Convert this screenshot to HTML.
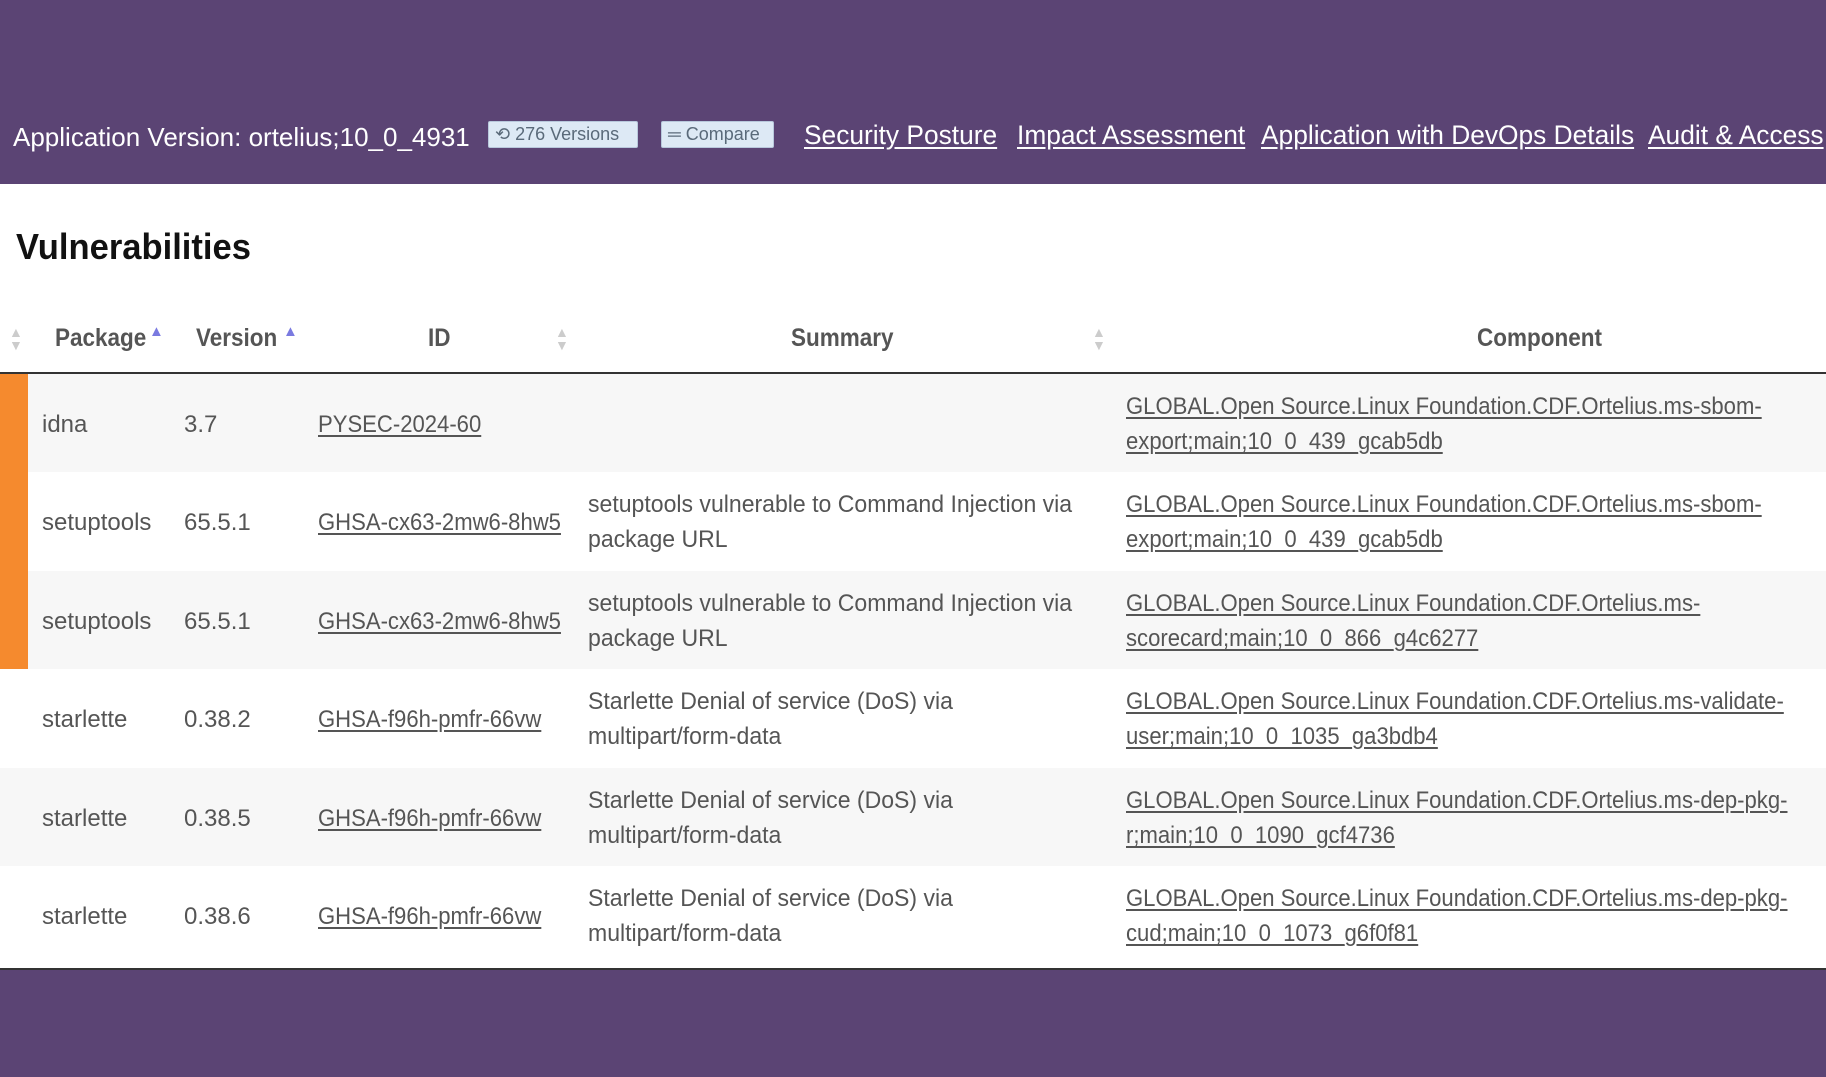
<!DOCTYPE html>
<html><head><meta charset="utf-8"><style>
*{margin:0;padding:0;box-sizing:border-box}
body{width:1826px;height:1077px;background:#5b4474;position:relative;overflow:hidden;font-family:"Liberation Sans",sans-serif;color:#555}
.a{position:absolute;white-space:nowrap}
.hdr{color:#fff;font-size:26px;top:122px}
.nav{color:#fff;font-size:27px;top:120px;text-decoration:underline;text-underline-offset:3px;transform:scaleX(0.975);transform-origin:left}
.btn{top:121px;height:27px;background:#dde9f5;border:1px solid #b8c8dc;color:#5a6a7a;font-size:18px;line-height:25px;padding:0 6px;border-radius:2px}
.main{position:absolute;left:0;top:184px;width:1826px;height:786px;background:#fff}
.row{position:absolute;left:0;width:1826px;height:98px}
.c{position:absolute;font-size:24px;line-height:35px;color:#555;white-space:nowrap;transform-origin:left}
.u{text-decoration:underline;text-underline-offset:3px;transform:scaleX(0.92)}
.s{transform:scaleX(0.96)}
.th{position:absolute;top:140px;font-size:25px;font-weight:bold;color:#555;white-space:nowrap;transform:scaleX(0.9);transform-origin:left}
.sort{position:absolute;top:142px;color:#ccc;font-size:14px;line-height:13px;text-align:center}
.up{position:absolute;top:139px;color:#7a7ae0;font-size:15px}
</style></head><body>
<div class="a hdr" style="left:13px">Application Version: ortelius;10_0_4931</div>
<div class="a btn" style="left:488px;width:150px">&#x27F2; 276 Versions</div>
<div class="a btn" style="left:661px;width:113px">&#x2550; Compare</div>
<div class="a nav" style="left:804px">Security Posture</div>
<div class="a nav" style="left:1017px">Impact Assessment</div>
<div class="a nav" style="left:1261px">Application with DevOps Details</div>
<div class="a nav" style="left:1648px">Audit &amp; Access</div>
<div class="main">
<div class="a" style="left:16px;top:42px;font-size:36px;font-weight:bold;color:#111;transform:scaleX(0.96);transform-origin:left">Vulnerabilities</div>
<div class="sort" style="left:9px">▲<br>▼</div>
<div class="th" style="left:55px">Package</div><div class="up" style="left:149px">▲</div>
<div class="th" style="left:196px">Version</div><div class="up" style="left:283px">▲</div>
<div class="th" style="left:428px">ID</div>
<div class="sort" style="left:555px">▲<br>▼</div>
<div class="th" style="left:791px">Summary</div>
<div class="sort" style="left:1092px">▲<br>▼</div>
<div class="th" style="left:1477px">Component</div>
<div style="position:absolute;left:0;top:188px;width:1826px;height:2px;background:#333"></div>

<div class="row" style="top:190px;background:#f7f7f7"><div style="position:absolute;left:0;top:0;width:28px;height:98px;background:#f58a2e"></div>
<div class="c" style="left:42px;top:33px">idna</div><div class="c" style="left:184px;top:33px">3.7</div><div class="c u" style="left:318px;top:33px">PYSEC-2024-60</div>
<div class="c u" style="left:1126px;top:15px">GLOBAL.Open Source.Linux Foundation.CDF.Ortelius.ms-sbom-<br>export;main;10_0_439_gcab5db</div></div>

<div class="row" style="top:288px;background:#fff"><div style="position:absolute;left:0;top:0;width:28px;height:99px;background:#f58a2e"></div>
<div class="c" style="left:42px;top:33px">setuptools</div><div class="c" style="left:184px;top:33px">65.5.1</div><div class="c u" style="left:318px;top:33px">GHSA-cx63-2mw6-8hw5</div>
<div class="c s" style="left:588px;top:15px">setuptools vulnerable to Command Injection via<br>package URL</div>
<div class="c u" style="left:1126px;top:15px">GLOBAL.Open Source.Linux Foundation.CDF.Ortelius.ms-sbom-<br>export;main;10_0_439_gcab5db</div></div>

<div class="row" style="top:387px;background:#f7f7f7"><div style="position:absolute;left:0;top:0;width:28px;height:98px;background:#f58a2e"></div>
<div class="c" style="left:42px;top:33px">setuptools</div><div class="c" style="left:184px;top:33px">65.5.1</div><div class="c u" style="left:318px;top:33px">GHSA-cx63-2mw6-8hw5</div>
<div class="c s" style="left:588px;top:15px">setuptools vulnerable to Command Injection via<br>package URL</div>
<div class="c u" style="left:1126px;top:15px">GLOBAL.Open Source.Linux Foundation.CDF.Ortelius.ms-<br>scorecard;main;10_0_866_g4c6277</div></div>

<div class="row" style="top:485px;background:#fff">
<div class="c" style="left:42px;top:33px">starlette</div><div class="c" style="left:184px;top:33px">0.38.2</div><div class="c u" style="left:318px;top:33px">GHSA-f96h-pmfr-66vw</div>
<div class="c s" style="left:588px;top:15px">Starlette Denial of service (DoS) via<br>multipart/form-data</div>
<div class="c u" style="left:1126px;top:15px">GLOBAL.Open Source.Linux Foundation.CDF.Ortelius.ms-validate-<br>user;main;10_0_1035_ga3bdb4</div></div>

<div class="row" style="top:584px;background:#f7f7f7">
<div class="c" style="left:42px;top:33px">starlette</div><div class="c" style="left:184px;top:33px">0.38.5</div><div class="c u" style="left:318px;top:33px">GHSA-f96h-pmfr-66vw</div>
<div class="c s" style="left:588px;top:15px">Starlette Denial of service (DoS) via<br>multipart/form-data</div>
<div class="c u" style="left:1126px;top:15px">GLOBAL.Open Source.Linux Foundation.CDF.Ortelius.ms-dep-pkg-<br>r;main;10_0_1090_gcf4736</div></div>

<div class="row" style="top:682px;height:102px;background:#fff">
<div class="c" style="left:42px;top:33px">starlette</div><div class="c" style="left:184px;top:33px">0.38.6</div><div class="c u" style="left:318px;top:33px">GHSA-f96h-pmfr-66vw</div>
<div class="c s" style="left:588px;top:15px">Starlette Denial of service (DoS) via<br>multipart/form-data</div>
<div class="c u" style="left:1126px;top:15px">GLOBAL.Open Source.Linux Foundation.CDF.Ortelius.ms-dep-pkg-<br>cud;main;10_0_1073_g6f0f81</div></div>
<div style="position:absolute;left:0;top:784px;width:1826px;height:2px;background:#333"></div>
</div>
</body></html>
